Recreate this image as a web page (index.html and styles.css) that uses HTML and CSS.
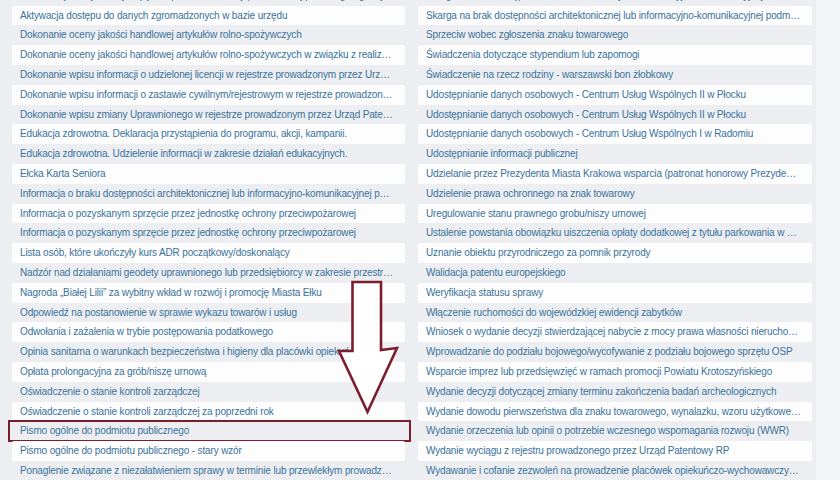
FILE: index.html
```html
<!DOCTYPE html>
<html lang="pl">
<head>
<meta charset="utf-8">
<link rel="stylesheet" href="styles.css">
</head>
<body>
<div class="page">
  <div class="columns">
    <ul class="list">
      <li class="row">Aktualizacja danych dotyczących wpisu do ewidencji prowadzonej przez organ gminy</li>
      <li class="row odd">Aktywacja dostępu do danych zgromadzonych w bazie urzędu</li>
      <li class="row">Dokonanie oceny jakości handlowej artykułów rolno-spożywczych</li>
      <li class="row odd">Dokonanie oceny jakości handlowej artykułów rolno-spożywczych w związku z realizacją umowy</li>
      <li class="row">Dokonanie wpisu informacji o udzielonej licencji w rejestrze prowadzonym przez Urząd Patentowy</li>
      <li class="row odd">Dokonanie wpisu informacji o zastawie cywilnym/rejestrowym w rejestrze prowadzonym przez Urząd</li>
      <li class="row">Dokonanie wpisu zmiany Uprawnionego w rejestrze prowadzonym przez Urząd Patentowy RP</li>
      <li class="row odd">Edukacja zdrowotna. Deklaracja przystąpienia do programu, akcji, kampanii.</li>
      <li class="row">Edukacja zdrowotna. Udzielenie informacji w zakresie działań edukacyjnych.</li>
      <li class="row odd">Ełcka Karta Seniora</li>
      <li class="row">Informacja o braku dostępności architektonicznej lub informacyjno-komunikacyjnej podmiotu</li>
      <li class="row odd">Informacja o pozyskanym sprzęcie przez jednostkę ochrony przeciwpożarowej</li>
      <li class="row">Informacja o pozyskanym sprzęcie przez jednostkę ochrony przeciwpożarowej</li>
      <li class="row odd">Lista osób, które ukończyły kurs ADR początkowy/doskonalący</li>
      <li class="row">Nadzór nad działaniami geodety uprawnionego lub przedsiębiorcy w zakresie przestrzegania przepisów</li>
      <li class="row odd">Nagroda „Białej Lilii” za wybitny wkład w rozwój i promocję Miasta Ełku</li>
      <li class="row">Odpowiedź na postanowienie w sprawie wykazu towarów i usług</li>
      <li class="row odd">Odwołania i zażalenia w trybie postępowania podatkowego</li>
      <li class="row">Opinia sanitarna o warunkach bezpieczeństwa i higieny dla placówki opiekuńczo-wychowawczej</li>
      <li class="row odd">Opłata prolongacyjna za grób/niszę urnową</li>
      <li class="row">Oświadczenie o stanie kontroli zarządczej</li>
      <li class="row odd">Oświadczenie o stanie kontroli zarządczej za poprzedni rok</li>
      <li class="row marked">Pismo ogólne do podmiotu publicznego</li>
      <li class="row odd">Pismo ogólne do podmiotu publicznego - stary wzór</li>
      <li class="row">Ponaglenie związane z niezałatwieniem sprawy w terminie lub przewlekłym prowadzeniem postępowania</li>
    </ul>
    <ul class="list">
      <li class="row">Skarga na brak dostępności architektonicznej lub informacyjno-komunikacyjnej – wzór</li>
      <li class="row odd">Skarga na brak dostępności architektonicznej lub informacyjno-komunikacyjnej podmiotu publicznego</li>
      <li class="row">Sprzeciw wobec zgłoszenia znaku towarowego</li>
      <li class="row odd">Świadczenia dotyczące stypendium lub zapomogi</li>
      <li class="row">Świadczenie na rzecz rodziny - warszawski bon żłobkowy</li>
      <li class="row odd">Udostępnianie danych osobowych - Centrum Usług Wspólnych II w Płocku</li>
      <li class="row">Udostępnianie danych osobowych - Centrum Usług Wspólnych II w Płocku</li>
      <li class="row odd">Udostępnianie danych osobowych - Centrum Usług Wspólnych I w Radomiu</li>
      <li class="row">Udostępnianie informacji publicznej</li>
      <li class="row odd">Udzielanie przez Prezydenta Miasta Krakowa wsparcia (patronat honorowy Prezydenta Miasta)</li>
      <li class="row">Udzielenie prawa ochronnego na znak towarowy</li>
      <li class="row odd">Uregulowanie stanu prawnego grobu/niszy urnowej</li>
      <li class="row">Ustalenie powstania obowiązku uiszczenia opłaty dodatkowej z tytułu parkowania w strefie</li>
      <li class="row odd">Uznanie obiektu przyrodniczego za pomnik przyrody</li>
      <li class="row">Walidacja patentu europejskiego</li>
      <li class="row odd">Weryfikacja statusu sprawy</li>
      <li class="row">Włączenie ruchomości do wojewódzkiej ewidencji zabytków</li>
      <li class="row odd">Wniosek o wydanie decyzji stwierdzającej nabycie z mocy prawa własności nieruchomości</li>
      <li class="row">Wprowadzanie do podziału bojowego/wycofywanie z podziału bojowego sprzętu OSP</li>
      <li class="row odd">Wsparcie imprez lub przedsięwzięć w ramach promocji Powiatu Krotoszyńskiego</li>
      <li class="row">Wydanie decyzji dotyczącej zmiany terminu zakończenia badań archeologicznych</li>
      <li class="row odd">Wydanie dowodu pierwszeństwa dla znaku towarowego, wynalazku, wzoru użytkowego</li>
      <li class="row">Wydanie orzeczenia lub opinii o potrzebie wczesnego wspomagania rozwoju (WWR)</li>
      <li class="row odd">Wydanie wyciągu z rejestru prowadzonego przez Urząd Patentowy RP</li>
      <li class="row">Wydawanie i cofanie zezwoleń na prowadzenie placówek opiekuńczo-wychowawczych typu rodzinnego</li>
    </ul>
  </div>
  <svg class="arrow" width="840" height="480" viewBox="0 0 840 480" aria-hidden="true">
    <path d="M352.5 282 L381 282 L381 350 L397 348 L367.5 412 L339 351 L352.5 351 Z" fill="#ffffff" stroke="#7c1d2f" stroke-width="2.6" stroke-linejoin="miter"/>
  </svg>
</div>
</body>
</html>
```

FILE: styles.css
```css
html, body {
  margin: 0;
  padding: 0;
}

body {
  background: #f4f5f7;
  font-family: "Liberation Sans", Arial, sans-serif;
  width: 840px;
  height: 480px;
  overflow: hidden;
}

.page {
  position: relative;
  width: 840px;
  height: 480px;
  overflow: hidden;
}

.columns {
  display: flex;
  gap: 13px;
  width: 816px;
  height: 480px;
  box-sizing: border-box;
  padding-left: 12px;
  background: #eceef2;
}

.list {
  list-style: none;
  margin: -14.2px 0 0;
  padding: 0;
  width: 393px;
  flex: none;
}

.list + .list {
  width: 394px;
}

.row {
  position: relative;
  height: 19.8px;
  line-height: 19.8px;
  padding: 0 11px 0 8px;
  font-size: 10px;
  letter-spacing: -0.15px;
  color: #3a729a;
  white-space: nowrap;
  overflow: hidden;
  text-overflow: ellipsis;
  border-radius: 2px;
}

.row.odd {
  background: #fdfdfe;
}

.row.marked {
  overflow: visible;
}

.row.marked::after {
  content: "";
  position: absolute;
  left: -4px;
  right: -6px;
  top: -1.5px;
  bottom: -1px;
  border: 2.2px solid #7c1d2f;
  pointer-events: none;
}

.arrow {
  position: absolute;
  left: 0;
  top: 0;
  pointer-events: none;
}
```
